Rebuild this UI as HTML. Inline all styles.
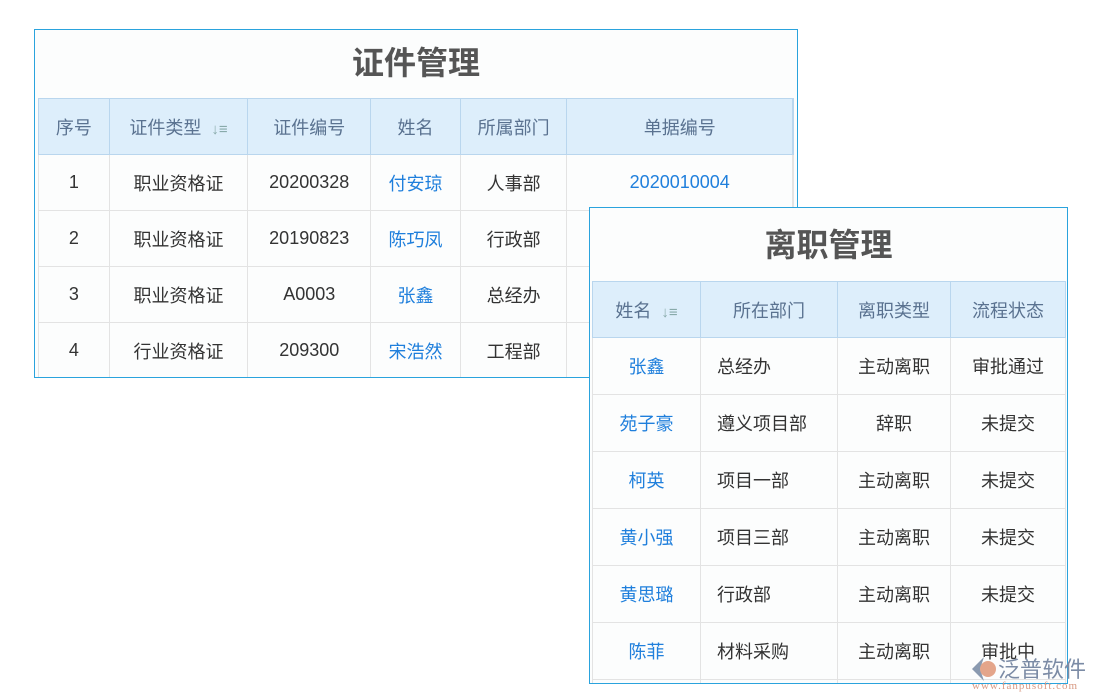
<!DOCTYPE html><html><head><meta charset="utf-8"><style>
html,body{margin:0;width:1100px;height:700px;overflow:hidden}
body{background:#fff;position:relative;font-family:"Liberation Sans","Noto Sans CJK SC",sans-serif}
.p{position:absolute;background:#fcfdfd;border:1px solid #2aa3dd;overflow:hidden}
.t{position:absolute;left:0;right:0;text-align:center;font-weight:bold;color:#555;font-size:32px;line-height:40px}
table{position:absolute;border-collapse:collapse;font-size:18px;color:#333}
td,th{border:1px solid #e3e3e3;text-align:center;padding:0;font-weight:normal}
th{background:#ddeefb;color:#5a7290;border-color:#b9d6ee}
.b{color:#1f7fdc}.l{text-align:left;padding-left:16px}
.s{font-size:15px;color:#8aa;margin-left:10px}
</style></head><body>
<div class="p" style="left:34px;top:29px;width:762px;height:347px">
<div class="t" style="top:13px">证件管理</div>
<table style="left:3px;top:68px;width:756px">
<tr style="height:56px"><th style="width:70px">序号</th><th style="width:138px">证件类型<span class="s">↓≡</span></th><th style="width:122px">证件编号</th><th style="width:89px">姓名</th><th style="width:106px">所属部门</th><th style="width:225px">单据编号</th><th></th></tr>
<tr style="height:56px"><td>1</td><td>职业资格证</td><td>20200328</td><td class="b">付安琼</td><td>人事部</td><td class="b">2020010004</td><td></td></tr>
<tr style="height:56px"><td>2</td><td>职业资格证</td><td>20190823</td><td class="b">陈巧凤</td><td>行政部</td><td></td><td></td></tr>
<tr style="height:56px"><td>3</td><td>职业资格证</td><td>A0003</td><td class="b">张鑫</td><td>总经办</td><td></td><td></td></tr>
<tr style="height:56px"><td>4</td><td>行业资格证</td><td>209300</td><td class="b">宋浩然</td><td>工程部</td><td></td><td></td></tr>
</table></div>
<div class="p" style="left:589px;top:207px;width:477px;height:475px">
<div class="t" style="top:17px">离职管理</div>
<table style="left:2px;top:73px;width:474px">
<tr style="height:56px"><th style="width:107px">姓名<span class="s">↓≡</span></th><th style="width:136px">所在部门</th><th style="width:112px">离职类型</th><th>流程状态</th></tr>
<tr style="height:57px"><td class="b">张鑫</td><td class="l">总经办</td><td>主动离职</td><td>审批通过</td></tr>
<tr style="height:57px"><td class="b">苑子豪</td><td class="l">遵义项目部</td><td>辞职</td><td>未提交</td></tr>
<tr style="height:57px"><td class="b">柯英</td><td class="l">项目一部</td><td>主动离职</td><td>未提交</td></tr>
<tr style="height:57px"><td class="b">黄小强</td><td class="l">项目三部</td><td>主动离职</td><td>未提交</td></tr>
<tr style="height:57px"><td class="b">黄思璐</td><td class="l">行政部</td><td>主动离职</td><td>未提交</td></tr>
<tr style="height:57px"><td class="b">陈菲</td><td class="l">材料采购</td><td>主动离职</td><td>审批中</td></tr>
<tr style="height:57px"><td></td><td></td><td></td><td></td></tr>
</table></div>
<svg style="position:absolute;left:970px;top:655px" width="30" height="28"><path d="M14 2 L2 14 L14 26 L10 14Z" fill="#8a9ab0"/><circle cx="18" cy="14" r="8" fill="#e4a58a"/></svg>
<div style="position:absolute;left:998px;top:652px;font-size:22px;color:#7b8ba5">泛普软件</div>
<div style="position:absolute;left:972px;top:680px;font-size:11px;color:#d89a84;font-family:'Liberation Serif',serif;letter-spacing:1px">www.fanpusoft.com</div>
</body></html>
